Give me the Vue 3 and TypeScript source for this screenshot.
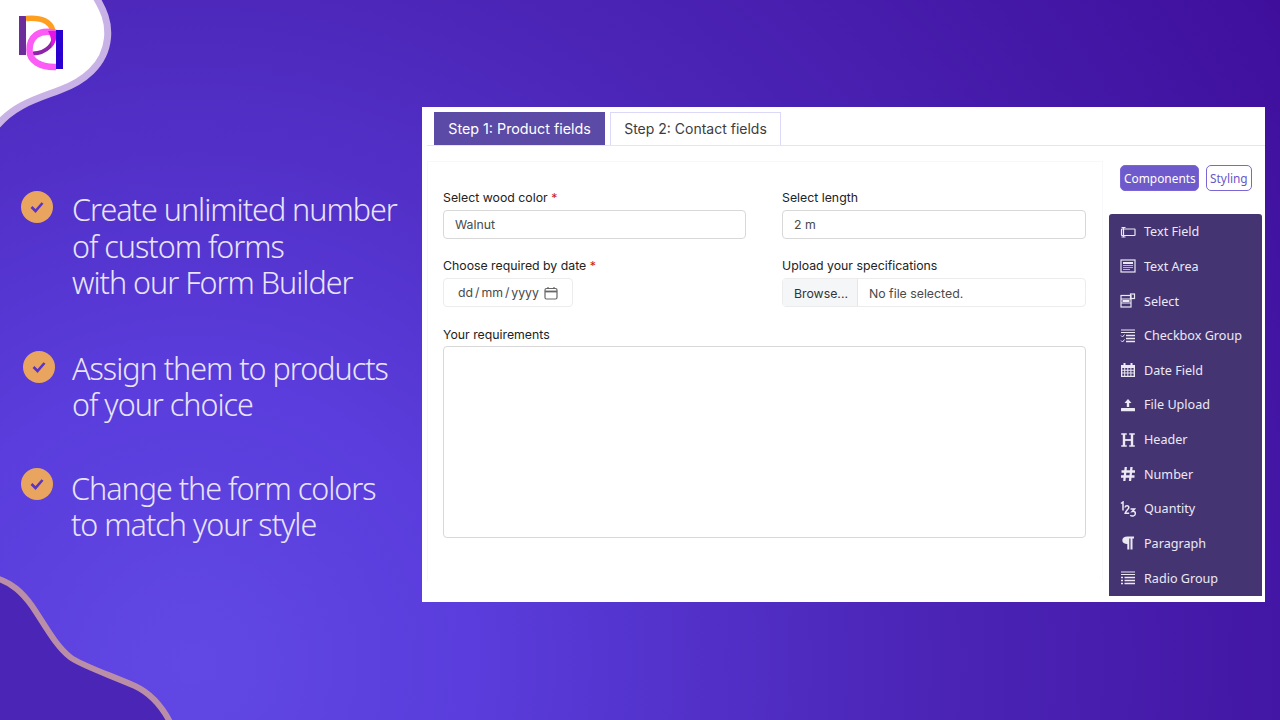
<script setup lang="ts">
const features: string[][] = [
  ['Create unlimited number', 'of custom forms', 'with our Form Builder'],
  ['Assign them to products', 'of your choice'],
  ['Change the form colors', 'to match your style'],
]
const components: { name: string; icon: string }[] = [
  { name: 'Text Field', icon: 'textfield' },
  { name: 'Text Area', icon: 'textarea' },
  { name: 'Select', icon: 'select' },
  { name: 'Checkbox Group', icon: 'checkbox' },
  { name: 'Date Field', icon: 'date' },
  { name: 'File Upload', icon: 'upload' },
  { name: 'Header', icon: 'header' },
  { name: 'Number', icon: 'number' },
  { name: 'Quantity', icon: 'quantity' },
  { name: 'Paragraph', icon: 'paragraph' },
  { name: 'Radio Group', icon: 'radio' },
]
</script>

<template>
  <div class="page">
    <svg class="decor" width="1280" height="720" viewBox="0 0 1280 720" aria-hidden="true">
      <path d="M94 -6 C104 10 109 22 107.5 38 C105 66 82 82 60 90 C40 98 14 104 -4 127 L-4 -6 Z" fill="#fff" stroke="#c9b3e6" stroke-width="7" />
      <path d="M-4 578 C12 583 22 592 32 606 C45 625 55 645 70 657 C80 665 110 675 135 686 C150 693 162 705 172 726 L-4 726 Z" fill="#4a25b6" stroke="#bb8ea8" stroke-width="6" />
      <rect x="19" y="16" width="7" height="39" fill="#6a2d9a" />
      <path d="M26 18.5 C42 17 51 22 53 31" fill="none" stroke="#ff9f1f" stroke-width="5.5" />
      <path d="M54 32 C56 44 46 53 33 53.5" fill="none" stroke="#8e24aa" stroke-width="4" />
      <path d="M56 33 C38 28 29.5 38 29.5 50 C29.5 61 40 67.5 56 67" fill="none" stroke="#fb5cf5" stroke-width="6.5" />
      <path d="M56 31 C57 38 55 44 51 48 C52 42 51 36 48 31 Z" fill="#e414e4" />
      <rect x="56" y="30" width="7" height="39" fill="#2a00d0" />
    </svg>

    <section class="features">
      <div v-for="(lines, i) in features" :key="i" class="feature">
        <span class="badge">
          <svg width="14" height="12" viewBox="0 0 14 12"><path d="M1.5 6 L5.5 10 L12.5 2" fill="none" stroke="#5a35c4" stroke-width="2.6" /></svg>
        </span>
        <p class="feature-text"><span v-for="line in lines" :key="line" class="line">{{ line }}</span></p>
      </div>
    </section>

    <main class="panel">
      <div class="builder">
        <nav class="tabs">
          <div class="tab active">Step 1: Product fields</div>
          <div class="tab">Step 2: Contact fields</div>
        </nav>
        <form class="form" @submit.prevent>
          <div class="grid">
            <div class="field">
              <label>Select wood color <b>*</b></label>
              <div class="input">Walnut</div>
            </div>
            <div class="field">
              <label>Select length</label>
              <div class="input">2 m</div>
            </div>
            <div class="field">
              <label>Choose required by date <b>*</b></label>
              <div class="input date">
                <span>dd / mm / yyyy</span>
                <svg width="14" height="14" viewBox="0 0 14 14"><rect x="1" y="2.5" width="12" height="10.5" rx="1.5" fill="none" stroke="#666" stroke-width="1.2" /><path d="M1 5.5 H13" stroke="#666" stroke-width="1.8" /><path d="M4 1 V3 M10 1 V3" stroke="#666" stroke-width="1.2" /></svg>
              </div>
            </div>
            <div class="field">
              <label>Upload your specifications</label>
              <div class="input file"><span class="browse">Browse...</span><span class="nofile">No file selected.</span></div>
            </div>
            <div class="field wide">
              <label>Your requirements</label>
              <div class="textarea"></div>
            </div>
          </div>
        </form>
      </div>

      <aside class="side">
        <div class="switch">
          <span class="pill on">Components</span>
          <span class="pill">Styling</span>
        </div>
        <ul class="list">
          <li v-for="c in components" :key="c.name" class="item">
            <svg class="ico" width="16" height="16" viewBox="0 0 16 16">
              <g v-if="c.icon === 'textfield'" fill="none" stroke="#ece8f4" stroke-width="1.2">
                <rect x="1.5" y="5" width="13.5" height="6.5" rx=".5" /><path d="M1.5 3.5 H5.5 M1.5 13 H5.5 M3.5 3.5 V13" />
              </g>
              <g v-else-if="c.icon === 'textarea'">
                <rect x="1" y="2" width="14" height="12" fill="none" stroke="#ece8f4" stroke-width="1.2" /><rect x="3" y="4" width="10" height="2" fill="#ece8f4" /><path d="M3 7.5 H13 M3 9.5 H13 M3 11.5 H10" stroke="#b9b0d0" />
              </g>
              <g v-else-if="c.icon === 'select'" fill="none" stroke="#ece8f4" stroke-width="1.2">
                <rect x="1" y="2.5" width="10" height="11.5" /><path d="M1 6 H11 M1 10 H11" /><rect x="10.5" y="1" width="4" height="4.5" /><rect x="2.5" y="7" width="7" height="2" fill="#ece8f4" stroke="none" />
              </g>
              <g v-else-if="c.icon === 'checkbox'" stroke="#ece8f4" fill="none">
                <path d="M1 2 H15 M1 4.5 H15" stroke-width="1.1" /><path d="M6 7.5 H15 M6 10.5 H15 M6 13.5 H15" stroke-width="1.3" /><path d="M1 7.5 L2.5 9 L4.5 6.5 M1 12.5 L2.5 14 L4.5 11.5" stroke-width="1" />
              </g>
              <g v-else-if="c.icon === 'date'" fill="#ece8f4">
                <path fill-rule="evenodd" d="M1 3 H3.5 V1 H5.5 V3 H10.5 V1 H12.5 V3 H15 V15 H1 Z M2.3 6 V7.8 H4.2 V6 Z M5.2 6 V7.8 H7.3 V6 Z M8.3 6 V7.8 H10.4 V6 Z M11.4 6 V7.8 H13.6 V6 Z M2.3 8.8 V10.6 H4.2 V8.8 Z M5.2 8.8 V10.6 H7.3 V8.8 Z M8.3 8.8 V10.6 H10.4 V8.8 Z M11.4 8.8 V10.6 H13.6 V8.8 Z M2.3 11.6 V13.7 H4.2 V11.6 Z M5.2 11.6 V13.7 H7.3 V11.6 Z M8.3 11.6 V13.7 H10.4 V11.6 Z M11.4 11.6 V13.7 H13.6 V11.6 Z" />
              </g>
              <g v-else-if="c.icon === 'upload'" fill="#ece8f4">
                <path d="M8 2 L11.5 6 H9.2 V10 H6.8 V6 H4.5 Z" /><rect x="1" y="11" width="14" height="3.2" rx=".5" />
              </g>
              <g v-else-if="c.icon === 'header'" fill="none" stroke="#ece8f4">
                <path d="M4 2 V14 M12 2 V14" stroke-width="2.4" /><path d="M4 8 H12" stroke-width="1.8" /><path d="M1.2 2 H6.8 M9.2 2 H14.8 M1.2 14 H6.8 M9.2 14 H14.8" stroke-width="1.4" />
              </g>
              <g v-else-if="c.icon === 'number'" fill="none" stroke="#ece8f4" stroke-width="2.3">
                <path d="M5.8 1 L4.3 15 M11.5 1 L10 15 M1.5 5.5 H15 M1 10.5 H14.5" />
              </g>
              <g v-else-if="c.icon === 'quantity'" fill="none" stroke="#ece8f4" stroke-width="1.5">
                <path d="M1 2.5 L3 1 V9.5" /><path d="M5 6.5 C5.4 4 9 4.2 8.8 6.6 C8.6 8.2 6 9.5 5.2 12.2 H9.2" /><path d="M10.5 8 H14.5 L12.3 10.4 C14.5 10 15.6 11.2 15.3 13 C15 15.4 11.5 15.6 10.3 14.2" />
              </g>
              <g v-else-if="c.icon === 'paragraph'" fill="#ece8f4">
                <path d="M14 1.5 V3.5 H12.5 V14.5 H10.5 V3.5 H9.3 V14.5 H7.3 V9 C4.3 9 2.3 7.8 2.3 5.3 C2.3 3 4.2 1.5 7.5 1.5 Z" />
              </g>
              <g v-else stroke="#ece8f4" fill="none">
                <path d="M1 2 H15 M1 4.5 H15" stroke-width="1.1" /><path d="M4.5 7.5 H15 M4.5 10.5 H15 M4.5 13.5 H15" stroke-width="1.3" /><path d="M1 7.5 H3 M1 10.5 H3 M1 13.5 H3" stroke-width="1.6" />
              </g>
            </svg>
            <span>{{ c.name }}</span>
          </li>
        </ul>
      </aside>
    </main>
  </div>
</template>

<style>
html, body { margin: 0; }
</style>

<style scoped>
.page {
  position: relative;
  width: 1280px;
  height: 720px;
  overflow: hidden;
  display: flex;
  background: radial-gradient(circle at 15% 92%, #6148e4 0%, #5a3ddc 22%, #4c26b8 55%, #3f0f9c 100%);
}
.decor { position: absolute; left: 0; top: 0; }
.features {
  position: relative;
  width: 422px;
  flex: none;
  padding-top: 191px;
  box-sizing: border-box;
}
.feature { display: flex; align-items: flex-start; margin-left: 21px; margin-bottom: 49px; }
.feature:nth-child(2) { margin-left: 23px; margin-bottom: 47px; }
.feature:nth-child(3) { margin-bottom: 0; }
.badge {
  width: 32px;
  height: 32px;
  flex: none;
  border-radius: 50%;
  background: #e9a55f;
  display: flex;
  align-items: center;
  justify-content: center;
  margin-right: 19px;
}
.feature:nth-child(2) .badge { margin-right: 17px; margin-top: 1px; }
.feature:nth-child(3) .badge { margin-right: 18px; margin-top: -2px; }
.feature-text {
  margin: 0;
  font-family: "Noto Sans", sans-serif;
  font-weight: 300;
  font-size: 30.5px;
  letter-spacing: -1px;
  line-height: 36.5px;
  color: #e9e4f8;
  white-space: nowrap;
}
.line { display: block; }

.panel {
  position: relative;
  margin-top: 107px;
  width: 843px;
  height: 495px;
  background: #fff;
  display: flex;
  font-family: Inter, sans-serif;
}
.builder { width: 686px; flex: none; padding-left: 5px; box-sizing: border-box; }
.tabs {
  display: flex;
  gap: 5px;
  height: 39px;
  box-sizing: border-box;
  padding: 5px 0 0 7px;
  width: 838px;
  border-bottom: 1px solid #e6e3f5;
}
.tab {
  width: 171px;
  height: 33px;
  box-sizing: border-box;
  border: 1px solid #dcd8fa;
  border-bottom: 0;
  font-size: 14px;
  line-height: 32px;
  text-align: center;
  color: #3c3c3c;
}
.tab.active { background: #5b4aa6; border-color: #5b4aa6; color: #fff; font-size: 14.3px; }
.form {
  margin-top: 15px;
  width: 676px;
  height: 420px;
  box-sizing: border-box;
  border: 1px solid #f8f8fa;
  border-bottom: 0;
  padding: 27px 15px 0;
}
.grid { display: grid; grid-template-columns: 303px 304px; column-gap: 36px; row-gap: 18px; }
.field { min-width: 0; }
.wide { grid-column: 1 / 3; }
label {
  display: block;
  font-size: 12.3px;
  line-height: 18px;
  margin-bottom: 2.5px;
  color: #222;
}
.wide label { margin-top: 1px; margin-bottom: 1.5px; }
label b { color: #d01818; font-weight: 400; }
.input {
  height: 29.5px;
  box-sizing: border-box;
  border: 1.5px solid #d8d8d8;
  border-radius: 4px;
  font-size: 12.3px;
  line-height: 27px;
  padding-left: 11px;
  color: #4a4a4a;
}
.date {
  width: 130px;
  display: flex;
  align-items: center;
  gap: 5px;
  padding: 1px 0 0 14px;
  border: 1px solid #ececec;
  word-spacing: -1.5px;
}
.file { display: flex; padding: 0; border: 1px solid #ececec; line-height: 29.5px; }
.browse { width: 75px; box-sizing: border-box; padding-left: 11px; background: #f5f6f8; border-right: 1px solid #e6e6e6; color: #333; }
.nofile { padding-left: 11px; }
.textarea {
  height: 192px;
  box-sizing: border-box;
  border: 1.5px solid #d8d8d8;
  border-radius: 4px;
}
.side { flex: none; width: 157px; font-family: "Noto Sans", sans-serif; }
.switch { display: flex; gap: 7px; padding: 58px 0 0 12px; }
.pill {
  height: 26px;
  box-sizing: border-box;
  border: 1px solid #7a66d4;
  border-radius: 5px;
  font-size: 11.9px;
  line-height: 25px;
  padding: 0 3px;
  color: #6a56c8;
}
.pill.on { width: 79px; background: #6f5acb; color: #fff; text-align: center; }
.list {
  list-style: none;
  margin: 23px 0 0 1px;
  padding: 0.5px 0 0;
  width: 153px;
  height: 382px;
  box-sizing: border-box;
  background: #443572;
  border-radius: 3px 3px 0 0;
}
.item {
  height: 34.63px;
  display: flex;
  align-items: center;
  padding-left: 11px;
  font-size: 12.6px;
  color: #ece8f4;
}
.ico { margin-right: 8px; flex: none; }
</style>
